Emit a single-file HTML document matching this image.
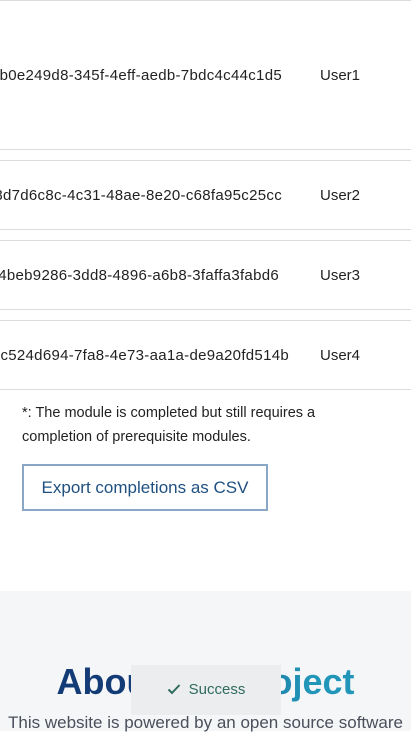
<!DOCTYPE html>
<html><head><meta charset="utf-8"><style>
body{margin:0;width:411px;height:731px;overflow:hidden;background:#fff;font-family:"Liberation Sans",sans-serif;color:#222;position:relative}
.l{position:absolute;left:0;width:411px;height:1px;background:#dcdcdc}
.t{position:absolute;font-size:15px;white-space:nowrap;line-height:16px}
.id{letter-spacing:0.3px}
.u{left:320px}
</style></head><body>
<div class="l" style="top:0"></div>
<div class="l" style="top:149px"></div>
<div class="l" style="top:160px"></div>
<div class="l" style="top:229px"></div>
<div class="l" style="top:240px"></div>
<div class="l" style="top:309px"></div>
<div class="l" style="top:320px"></div>
<div class="l" style="top:389px"></div>
<div class="t id" style="top:68px;right:129px">b0e249d8-345f-4eff-aedb-7bdc4c44c1d5</div><div class="t u" style="top:68px">User1</div>
<div class="t id" style="top:188px;right:129px">8d7d6c8c-4c31-48ae-8e20-c68fa95c25cc</div><div class="t u" style="top:188px">User2</div>
<div class="t id" style="top:268px;right:132px">4beb9286-3dd8-4896-a6b8-3faffa3fabd6</div><div class="t u" style="top:268px">User3</div>
<div class="t id" style="top:348px;right:122px">c524d694-7fa8-4e73-aa1a-de9a20fd514b</div><div class="t u" style="top:348px">User4</div>
<div style="position:absolute;left:22px;top:401px;width:322px;font-size:14.5px;line-height:24px">*: The module is completed but still requires a completion of prerequisite modules.</div>
<div style="position:absolute;left:22px;top:464px;width:242px;height:43px;border:2px solid #8aa8c6;color:#1f5080;font-size:17px;line-height:43px;text-align:center">Export completions as CSV</div>
<div style="position:absolute;left:0;top:591px;width:411px;height:140px;background:#f5f6f8"></div>
<div style="position:absolute;left:0;top:659px;width:411px;text-align:center;font-size:36px;font-weight:bold;line-height:46px;background:linear-gradient(90deg,#133b76 30%,#2196b8 75%);-webkit-background-clip:text;background-clip:text;color:transparent">About the project</div>
<div style="position:absolute;left:0;top:712px;width:411px;text-align:center;font-size:17px;color:#4a4f5a;white-space:nowrap;line-height:22px">This website is powered by an open source software</div>
<div style="position:absolute;left:131px;top:665px;width:150px;height:50px;background:#ecedee;color:#2e6b5e;font-size:15px;line-height:50px;text-align:center">
<svg width="14" height="12" viewBox="0 0 14 12" style="vertical-align:-1px;margin-right:8px"><path d="M1.5 6.5 L5 10 L12.5 2" fill="none" stroke="#2e6b5e" stroke-width="2"/></svg>Success</div>
</body></html>
